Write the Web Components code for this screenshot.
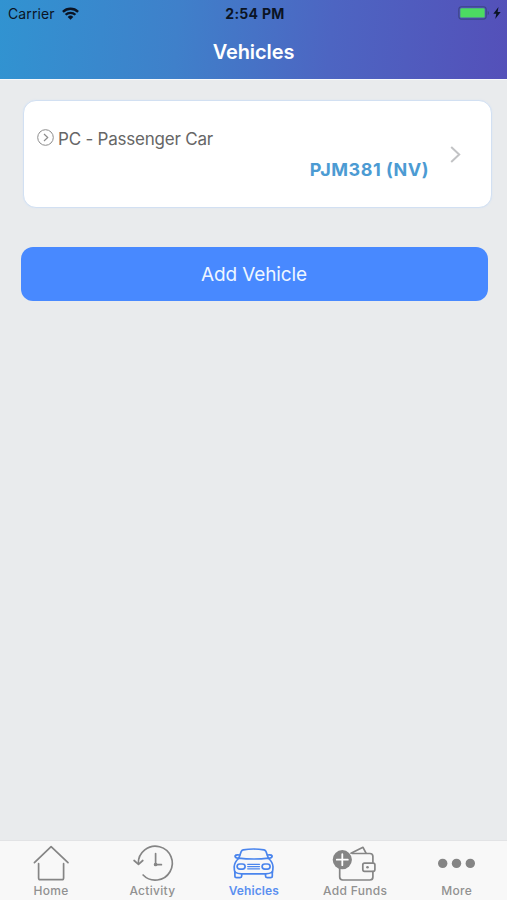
<!DOCTYPE html>
<html lang="en">
<head>
  <meta charset="utf-8">
  <meta name="viewport" content="width=device-width, initial-scale=1">
  <title>Vehicles</title>
  <style>
    body {
      margin: 0;
      height: 900px;
      overflow: hidden;
      display: flex;
      flex-direction: column;
      background: #e9ebed;
      font-family: Inter, "Liberation Sans", sans-serif;
    }

    main {
      flex: 1;
      display: flex;
      flex-direction: column;
      gap: 39px;
      padding: 21px 15px 0 20px;
    }
  </style>
</head>
<body>
  <app-header carrier="Carrier" time="2:54 PM">Vehicles</app-header>
  <main>
    <vehicle-card plate="PJM381 (NV)">PC - Passenger Car</vehicle-card>
    <action-button>Add Vehicle</action-button>
  </main>
  <tab-bar>
    <tab-item icon="home">Home</tab-item>
    <tab-item icon="activity">Activity</tab-item>
    <tab-item icon="car" active>Vehicles</tab-item>
    <tab-item icon="wallet">Add Funds</tab-item>
    <tab-item icon="more">More</tab-item>
  </tab-bar>

  <script>
    class AppHeader extends HTMLElement {
      constructor() {
        super();
        this._shadowDOM = this.attachShadow({ mode: 'open' });
      }

      connectedCallback() {
        this._shadowDOM.innerHTML = `
          <style>
            :host {
              display: block;
              height: 79px;
              background: linear-gradient(94deg, #3193d1 0%, #3f80ca 35%, #4d65c2 65%, #5450b9 100%);
              box-shadow: 0 1px 0 #f6f8fb;
            }

            #status {
              display: grid;
              grid-template-columns: 1fr auto 1fr;
              align-items: center;
              height: 26px;
              padding: 0 6px 0 8px;
              color: #0b1424;
            }

            #left, #right {
              display: flex;
              align-items: center;
            }

            #left {
              gap: 7px;
              font-size: 14px;
              letter-spacing: 0.1px;
            }

            #time {
              padding-left: 1px;
              font-size: 14px;
              font-weight: 700;
              letter-spacing: 0.3px;
            }

            #right {
              justify-content: flex-end;
              gap: 3px;
            }

            svg {
              display: block;
            }

            h1 {
              margin: 0;
              height: 52px;
              line-height: 52px;
              color: #fff;
              font-size: 20px;
              font-weight: 600;
              letter-spacing: -0.1px;
              text-align: center;
            }
          </style>
          <div id="status">
            <div id="left">
              <span>${this.getAttribute('carrier')}</span>
              <svg width="17" height="13" viewBox="0 0 17 13" fill="none" stroke="currentColor" stroke-width="2.3">
                <path d="M.9 4.9a10.8 10.8 0 0 1 15.2 0M3.6 7.8a7 7 0 0 1 9.8 0"/>
                <path d="M8.5 12.7 5.7 9.9a4 4 0 0 1 5.6 0z" fill="currentColor" stroke="none"/>
              </svg>
            </div>
            <span id="time">${this.getAttribute('time')}</span>
            <div id="right">
              <svg width="32" height="14" viewBox="0 0 32 14">
                <rect x=".8" y=".7" width="27.4" height="12.4" rx="2.8" fill="none" stroke="#3c4785" stroke-width="1.1"/>
                <rect x="2.3" y="2.2" width="24.4" height="9.4" rx="1.2" fill="#4cdb62"/>
                <path d="M29.7 4.8a2.5 2.5 0 0 1 0 4.4z" fill="#3c4785"/>
              </svg>
              <svg width="8" height="12" viewBox="0 0 8 12">
                <path d="M5.5 0 .3 6.7h3L2.2 12l5.5-7H4.6z" fill="currentColor"/>
              </svg>
            </div>
          </div>
          <h1><slot></slot></h1>
        `;
      }
    }

    class VehicleCard extends HTMLElement {
      constructor() {
        super();
        this._shadowDOM = this.attachShadow({ mode: 'open' });
      }

      connectedCallback() {
        this._shadowDOM.innerHTML = `
          <style>
            :host {
              box-sizing: border-box;
              display: flex;
              align-items: center;
              height: 108px;
              margin-left: 3px;
              padding: 0 30px 0 13px;
              border: 1px solid #d2e0f2;
              border-radius: 13px;
              background: #fff;
              box-shadow: 0 0 2px #d8e4f3;
            }

            #details {
              flex: 1;
              display: flex;
              flex-direction: column;
              gap: 7px;
            }

            #type {
              display: flex;
              align-items: center;
              gap: 4px;
              height: 24px;
              color: #666;
              font-size: 17px;
              line-height: 24px;
              letter-spacing: -0.22px;
            }

            #type svg {
              margin-top: -2px;
            }

            #plate {
              align-self: flex-end;
              color: #4c9bd3;
              font-size: 18px;
              font-weight: 700;
              line-height: 24px;
              letter-spacing: 0.5px;
            }

            #chevron {
              margin-left: 21px;
            }
          </style>
          <div id="details">
            <div id="type">
              <svg width="17" height="17" viewBox="0 0 17 17" fill="none" stroke="#8c8c8c">
                <circle cx="8.5" cy="8.5" r="7.8"/>
                <path d="m7 5 3.7 3.5L7 12" stroke-width="1.2"/>
              </svg>
              <span><slot></slot></span>
            </div>
            <div id="plate">${this.getAttribute('plate')}</div>
          </div>
          <svg id="chevron" width="11" height="17" viewBox="0 0 11 17" fill="none" stroke="#c2c3c5" stroke-width="2">
            <path d="m1.2 1 8 7.5-8 7.5"/>
          </svg>
        `;
      }
    }

    class ActionButton extends HTMLElement {
      constructor() {
        super();
        this._shadowDOM = this.attachShadow({ mode: 'open' });
      }

      connectedCallback() {
        this._shadowDOM.innerHTML = `
          <style>
            :host {
              display: block;
              margin: 0 4.5px 0 0.5px;
            }

            button {
              display: block;
              width: 100%;
              height: 54px;
              padding: 1px 0 0;
              border: none;
              border-radius: 12px;
              background: #4889ff;
              color: #eef6ff;
              font: 400 19px/54px Inter, "Liberation Sans", sans-serif;
              letter-spacing: -0.1px;
              cursor: pointer;
            }
          </style>
          <button type="button"><slot></slot></button>
        `;
      }
    }

    class TabBar extends HTMLElement {
      constructor() {
        super();
        this._shadowDOM = this.attachShadow({ mode: 'open' });
      }

      connectedCallback() {
        this._shadowDOM.innerHTML = `
          <style>
            :host {
              box-sizing: border-box;
              display: grid;
              grid-template-columns: repeat(5, 1fr);
              height: 60px;
              border-top: 1px solid #e2e3e5;
              background: #f8f8f8;
            }
          </style>
          <slot></slot>
        `;
      }
    }

    const tabIcons = {
      home: `
        <path d="M5.4 21.7 22.1 5.6 39 21.7"/>
        <path d="M9.6 22.7v14.3q0 1.7 1.7 1.7h21.6q1.7 0 1.7-1.7V22.7"/>`,
      activity: `
        <g transform="translate(-.9 -.5)">
          <path d="M8.2 23A17 17 0 1 1 13 34.5"/>
          <path d="m4 20 4.4 3.8 4.3-3.8M25.5 13v11.2h5.8"/>
          <circle cx="25.5" cy="24" r="1" fill="currentColor"/>
        </g>`,
      car: `
        <g transform="translate(.1 .2) scale(1 .95)">
          <path d="m6.8 17.8 2.3-7q.5-1.3 2-1.7 10.4-1.7 20.8 0 1.5.4 2 1.7l2.3 7"/>
          <path d="M7.6 14.6q-4-.6-4.6.8-.3 2 3.2 2.7M35.4 14.6q4-.6 4.6.8.3 2-3.2 2.7"/>
          <path d="M6.5 17.8q15 1.8 30 0M6.5 18.2Q2.3 22 2.1 27q0 4 .8 6.1M36.5 18.2q4.2 3.8 4.4 8.8 0 4-.8 6.1"/>
          <path d="M2.8 32v4.6q0 1.8 1.8 1.8h3.4q1.6 0 1.6-1.7V34.3M40.2 32v4.6q0 1.8-1.8 1.8H35q-1.6 0-1.6-1.7V34.3"/>
          <path d="M2.8 32.6Q5.5 34.3 9.6 34.4h23.8q4.1-.1 6.8-1.8"/>
          <rect x="5" y="24" width="8" height="5.4" rx="2.7"/>
          <rect x="30" y="24" width="8" height="5.4" rx="2.7"/>
          <path stroke-width="1.3" d="M15.6 24.3h11.8M15.6 26.7h11.8M15.6 29.1h11.8"/>
        </g>`,
      wallet: `
        <g transform="translate(1.5 -.5)">
          <path d="M18 13h17.4q3 0 3 3v5.8M38.4 31v5.5q0 3-3 3H8.2q-3 0-3-3V24"/>
          <path d="m16.5 12.7 12-5.9 3 5.9"/>
          <rect x="28.3" y="22.6" width="12.1" height="8.2" rx="1.7"/>
          <circle cx="33" cy="26.7" r="1.3" fill="currentColor" stroke="none"/>
          <circle cx="7.8" cy="19.2" r="9.6" fill="currentColor" stroke="none"/>
          <path d="M2.3 19.2h11M7.8 13.7v11" stroke="#fff" stroke-width="1.8"/>
        </g>`,
      more: `
        <g fill="currentColor" stroke="none">
          <circle cx="7.7" cy="22.4" r="4.7"/>
          <circle cx="21.5" cy="22.4" r="4.7"/>
          <circle cx="35.3" cy="22.4" r="4.7"/>
        </g>`
    };

    class TabItem extends HTMLElement {
      constructor() {
        super();
        this._shadowDOM = this.attachShadow({ mode: 'open' });
      }

      connectedCallback() {
        this._shadowDOM.innerHTML = `
          <style>
            :host {
              display: flex;
              flex-direction: column;
              align-items: center;
              color: #858585;
              cursor: pointer;
            }

            :host([active]) {
              color: #4a85ed;
            }

            svg {
              display: block;
              overflow: visible;
            }

            span {
              padding-left: 0.6px;
              color: #919191;
              font-size: 12px;
              font-weight: 500;
              line-height: 18px;
              letter-spacing: 0.3px;
            }

            :host([active]) span {
              color: #5b90f0;
              font-weight: 600;
              letter-spacing: 0.1px;
            }
          </style>
          <svg width="43" height="41" viewBox="0 0 43 41" fill="none" stroke="currentColor"
            stroke-width="1.7" stroke-linecap="round" stroke-linejoin="round">${tabIcons[this.getAttribute('icon')]}</svg>
          <span><slot></slot></span>
        `;
      }
    }

    customElements.define('app-header', AppHeader);
    customElements.define('vehicle-card', VehicleCard);
    customElements.define('action-button', ActionButton);
    customElements.define('tab-bar', TabBar);
    customElements.define('tab-item', TabItem);
  </script>
</body>
</html>
